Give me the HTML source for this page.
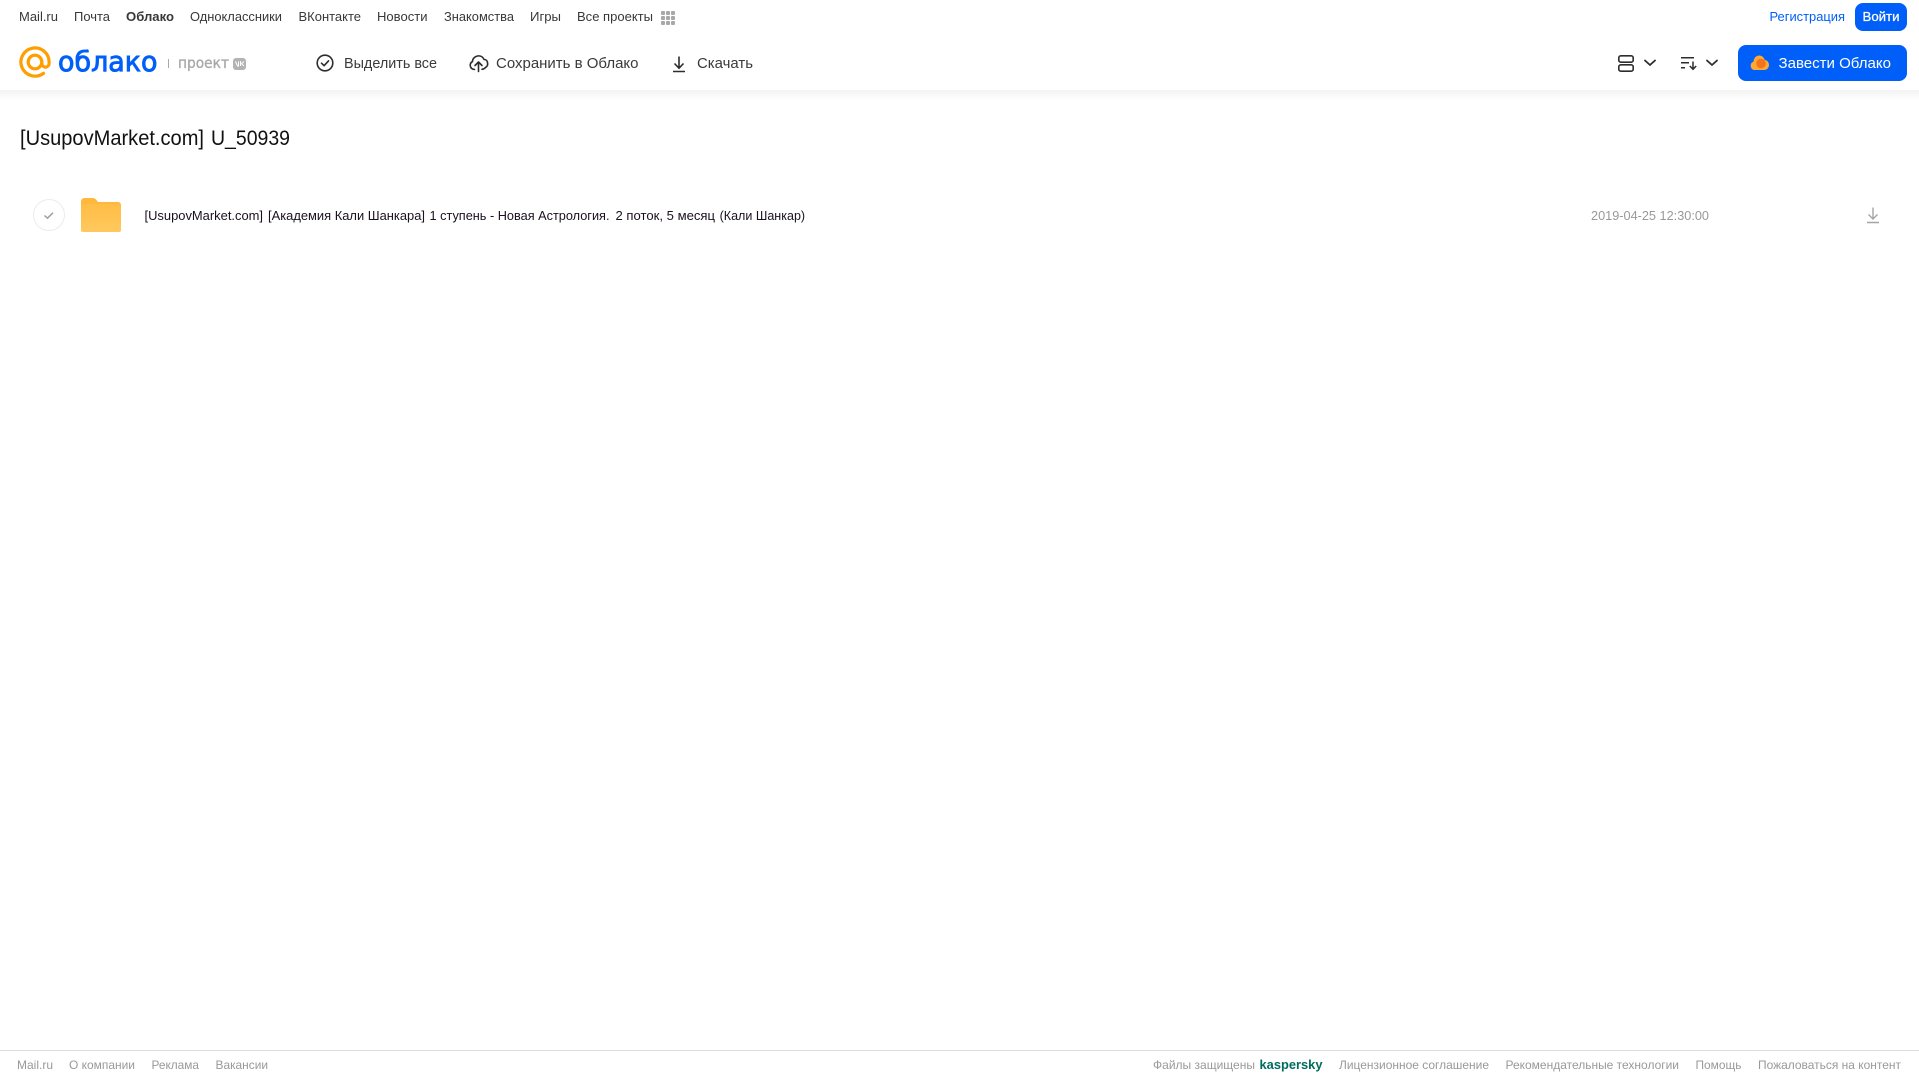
<!DOCTYPE html>
<html lang="ru"><head><meta charset="utf-8"><title>Облако</title>
<style>
html,body{margin:0;padding:0;background:#fff;width:1919px;height:1079px;overflow:hidden}
svg{display:block}
text{font-family:"Liberation Sans",sans-serif;white-space:pre}
.n{font-size:13px;fill:#383838}
.a{font-size:15px;fill:#3a3a3a}
.f{font-size:12px;fill:#999}
.r{font-size:13px;fill:#1a1020}
</style></head><body>
<svg xmlns="http://www.w3.org/2000/svg" width="1919" height="1079" viewBox="0 0 1919 1079">
<defs>
<linearGradient id="sh" x1="0" y1="0" x2="0" y2="1"><stop offset="0" stop-color="#f3f3f3"/><stop offset="1" stop-color="#fff"/></linearGradient>
<linearGradient id="fo" x1="0" y1="0" x2="0" y2="1"><stop offset="0" stop-color="#ffbd45"/><stop offset="1" stop-color="#ffc95f"/></linearGradient>
</defs>
<rect width="1919" height="1079" fill="#fff"/>
<rect x="0" y="90" width="1919" height="10" fill="url(#sh)"/>

<!-- top nav -->
<g>
<text class="n" x="19" y="21" textLength="39" lengthAdjust="spacingAndGlyphs">Mail.ru</text>
<text class="n" x="74" y="21" textLength="36" lengthAdjust="spacingAndGlyphs">Почта</text>
<text class="n" x="126" y="21" textLength="48" lengthAdjust="spacingAndGlyphs" font-weight="700">Облако</text>
<text class="n" x="190" y="21" textLength="92" lengthAdjust="spacingAndGlyphs">Одноклассники</text>
<text class="n" x="298.500" y="21" textLength="62.500" lengthAdjust="spacingAndGlyphs">ВКонтакте</text>
<text class="n" x="377" y="21" textLength="50.500" lengthAdjust="spacingAndGlyphs">Новости</text>
<text class="n" x="444" y="21" textLength="70" lengthAdjust="spacingAndGlyphs">Знакомства</text>
<text class="n" x="530" y="21" textLength="31" lengthAdjust="spacingAndGlyphs">Игры</text>
<text class="n" x="577" y="21" textLength="76" lengthAdjust="spacingAndGlyphs">Все проекты</text>
</g>
<g fill="#a8a8a8">
<rect x="661" y="11" width="4" height="4" rx="1"/><rect x="666" y="11" width="4" height="4" rx="1"/><rect x="671" y="11" width="4" height="4" rx="1"/>
<rect x="661" y="16" width="4" height="4" rx="1"/><rect x="666" y="16" width="4" height="4" rx="1"/><rect x="671" y="16" width="4" height="4" rx="1"/>
<rect x="661" y="21" width="4" height="4" rx="1"/><rect x="666" y="21" width="4" height="4" rx="1"/><rect x="671" y="21" width="4" height="4" rx="1"/>
</g>
<text x="1769.500" y="21" font-size="13" fill="#005ff9" textLength="75.500" lengthAdjust="spacingAndGlyphs">Регистрация</text>
<rect x="1855" y="3" width="52" height="28" rx="8" fill="#005ff9"/>
<text x="1862.500" y="21" font-size="13" fill="#fff" stroke="#fff" stroke-width=".25" textLength="37" lengthAdjust="spacingAndGlyphs">Войти</text>

<!-- logo -->
<path d="M41.900 62v1.500a3.600 3.600 0 0 0 7.200 0V62a14.100 14.100 0 1 0-5.600 11.300" fill="none" stroke="#ff9e00" stroke-width="3.200" stroke-linecap="round"/>
<circle cx="35" cy="62" r="6.800" fill="none" stroke="#ff9e00" stroke-width="3.200"/>
<text x="58" y="71" font-size="28" fill="#005ff9" stroke="#005ff9" stroke-width=".9" style="font-family:'DejaVu Sans',sans-serif" textLength="99.500" lengthAdjust="spacingAndGlyphs">облако</text>
<rect x="168" y="59" width="1" height="9" fill="#aaa"/>
<text x="178" y="68" font-size="15" fill="#a9a9a9" stroke="#a9a9a9" stroke-width=".35" textLength="51" lengthAdjust="spacingAndGlyphs" style="font-family:'DejaVu Sans',sans-serif">проект</text>
<rect x="233" y="58" width="13" height="12" rx="3" fill="#b3b3b3"/>
<path d="M235.500 61.500l2 4.500h1v-4.500M244 61.500l-2.500 2.200 2.500 2.300M240.500 61v5" fill="none" stroke="#fff" stroke-width="1"/>

<!-- actions -->
<circle cx="325" cy="63" r="7.800" fill="none" stroke="#2c2d2e" stroke-width="1.600"/>
<path d="M321.500 63.200l2.600 2.500 4.400-4.800" fill="none" stroke="#2c2d2e" stroke-width="1.600" stroke-linecap="round" stroke-linejoin="round"/>
<text class="a" x="344" y="68" textLength="93" lengthAdjust="spacingAndGlyphs">Выделить все</text>
<path d="M474.500 69.500c-5-.5-5.500-6-2-8 .2-6 9-8 11.500-2 4-.2 5 6 1.500 8-.8 1-2 1.600-3.500 1.800" fill="none" stroke="#2c2d2e" stroke-width="1.600" stroke-linecap="round" stroke-linejoin="round"/>
<path d="M478.500 71.500v-9M475 65.500l3.500-3.500 3.500 3.500" fill="none" stroke="#2c2d2e" stroke-width="1.600" stroke-linecap="round" stroke-linejoin="round"/>
<text class="a" x="496" y="68" textLength="142.500" lengthAdjust="spacingAndGlyphs">Сохранить в Облако</text>
<path d="M679 56.500v11.500M674.500 63.500l4.500 4.700 4.500-4.700M673 71.500h12" fill="none" stroke="#2c2d2e" stroke-width="1.600"/>
<text class="a" x="697" y="68" textLength="56" lengthAdjust="spacingAndGlyphs">Скачать</text>

<!-- right header -->
<rect x="1618.800" y="55.800" width="14.400" height="6.400" rx="2" fill="none" stroke="#2c2d2e" stroke-width="1.600"/>
<rect x="1618.800" y="64.800" width="14.400" height="6.400" rx="2" fill="none" stroke="#2c2d2e" stroke-width="1.600"/>
<path d="M1645 60.500l5 4.500 5-4.500" fill="none" stroke="#2c2d2e" stroke-width="1.800" stroke-linecap="round" stroke-linejoin="round"/>
<path d="M1681 57.800h13M1681 62.800h8M1681 67.800h4" fill="none" stroke="#2c2d2e" stroke-width="1.500"/>
<path d="M1693 61.500v7.500M1689.800 66l3.200 3.300 3.200-3.300" fill="none" stroke="#2c2d2e" stroke-width="1.500"/>
<path d="M1707 60.500l5 4.500 5-4.500" fill="none" stroke="#2c2d2e" stroke-width="1.800" stroke-linecap="round" stroke-linejoin="round"/>
<rect x="1738" y="45" width="169" height="36" rx="8" fill="#005ff9"/>
<path d="M1755 70c-3 0-4.300-2.200-4.300-4.300 0-2 1.200-3.400 2.700-3.900.4-3.700 2.700-6.300 5.800-6.300 2.800 0 4.800 2 5.500 4.500 2.700.2 4.300 2.600 4.300 5 0 2.700-2 5-4.800 5z" fill="#ffa930"/>
<circle cx="1761" cy="63.500" r="4.800" fill="#f4731f"/>
<text x="1778.500" y="68" font-size="15" fill="#fff" textLength="112.500" lengthAdjust="spacingAndGlyphs">Завести Облако</text>

<!-- title -->
<text x="20" y="145" font-size="21" fill="#111" textLength="184" lengthAdjust="spacingAndGlyphs">[UsupovMarket.com]</text>
<text x="211" y="145" font-size="21" fill="#111" textLength="79" lengthAdjust="spacingAndGlyphs">U_50939</text>

<!-- row -->
<circle cx="49" cy="215" r="15.500" fill="#fff" stroke="#ececec" stroke-width="1"/>
<path d="M44.500 215.500l3 2.700 5.500-5.500" fill="none" stroke="#a0a0a0" stroke-width="1.500"/>
<path d="M81 201.500a3.500 3.500 0 0 1 3.500-3.500h8c2 0 3 .8 3.800 1.800l1.700 2.200H118a3 3 0 0 1 3 3v6H81z" fill="#ffb73e"/>
<path d="M81 206a2 2 0 0 1 2-2h35a3 3 0 0 1 3 3v23a2 2 0 0 1-2 2H83a2 2 0 0 1-2-2z" fill="url(#fo)"/>
<text class="r" x="144.500" y="220" textLength="118.500" lengthAdjust="spacingAndGlyphs">[UsupovMarket.com]</text>
<text class="r" x="268" y="220" textLength="157" lengthAdjust="spacingAndGlyphs">[Академия Кали Шанкара]</text>
<text class="r" x="429.500" y="220" textLength="180" lengthAdjust="spacingAndGlyphs">1 ступень - Новая Астрология.</text>
<text class="r" x="615.500" y="220" textLength="99.500" lengthAdjust="spacingAndGlyphs">2 поток, 5 месяц</text>
<text class="r" x="719.600" y="220" textLength="85.500" lengthAdjust="spacingAndGlyphs">(Кали Шанкар)</text>
<text x="1591" y="220" font-size="13" fill="#999" textLength="118" lengthAdjust="spacingAndGlyphs">2019-04-25 12:30:00</text>
<path d="M1873 207.500v11M1868.500 214.500l4.500 4.500 4.500-4.500M1867 222.500h12" fill="none" stroke="#a5a5a5" stroke-width="1.400"/>

<!-- footer -->
<rect x="0" y="1050" width="1919" height="1" fill="#ddd"/>
<text class="f" x="17" y="1069" textLength="36" lengthAdjust="spacingAndGlyphs">Mail.ru</text>
<text class="f" x="69" y="1069" textLength="66" lengthAdjust="spacingAndGlyphs">О компании</text>
<text class="f" x="151.500" y="1069" textLength="47.500" lengthAdjust="spacingAndGlyphs">Реклама</text>
<text class="f" x="215.500" y="1069" textLength="52.500" lengthAdjust="spacingAndGlyphs">Вакансии</text>
<text class="f" x="1153" y="1069" textLength="102" lengthAdjust="spacingAndGlyphs">Файлы защищены</text>
<text x="1259.500" y="1069" font-size="13" font-weight="700" fill="#006d5c" textLength="63" lengthAdjust="spacingAndGlyphs">kaspersky</text>
<text class="f" x="1339" y="1069" textLength="150" lengthAdjust="spacingAndGlyphs">Лицензионное соглашение</text>
<text class="f" x="1505.500" y="1069" textLength="173.500" lengthAdjust="spacingAndGlyphs">Рекомендательные технологии</text>
<text class="f" x="1695.500" y="1069" textLength="46" lengthAdjust="spacingAndGlyphs">Помощь</text>
<text class="f" x="1758" y="1069" textLength="143" lengthAdjust="spacingAndGlyphs">Пожаловаться на контент</text>
</svg>
</body></html>
